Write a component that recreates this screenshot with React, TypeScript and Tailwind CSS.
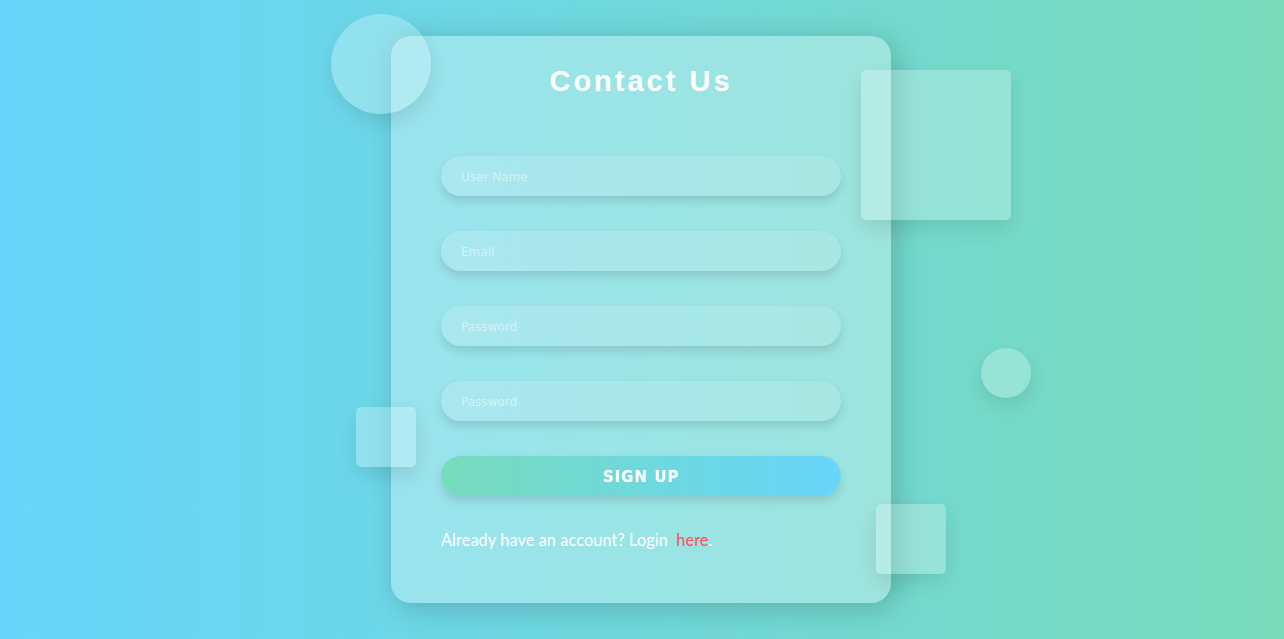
import React from "react";

const fields = ["User Name", "Email", "Password", "Password"];

function Shape({ className }: { className: string }) {
  return (
    <div
      className={`absolute bg-white/25 shadow-[0_8px_20px_rgba(0,0,0,0.1)] ${className}`}
    />
  );
}

export default function App() {
  return (
    <main className="flex h-screen w-full items-center justify-center bg-gradient-to-r from-[#68d5fb] to-[#79dbba]">
      <div className="relative mr-[2px]">
        <Shape className="left-[-60px] top-[-22px] z-10 h-[100px] w-[100px] rounded-full" />
        <Shape className="left-[470px] top-[34px] z-10 h-[150px] w-[150px] rounded-[5px]" />
        <Shape className="left-[-35px] top-[371px] z-10 h-[60px] w-[60px] rounded-[5px]" />
        <Shape className="left-[485px] top-[468px] z-10 h-[70px] w-[70px] rounded-[5px]" />
        <Shape className="left-[590px] top-[312px] h-[50px] w-[50px] rounded-full" />

        <div className="flex h-[567px] w-[500px] flex-col rounded-[20px] bg-white/30 px-[50px] shadow-[5px_5px_30px_rgba(0,0,0,0.2)]">
          <h2 className="mt-[24px] text-center font-['Liberation_Sans',Arial,sans-serif] text-[29px] font-bold tracking-[3px] text-white">
            Contact Us
          </h2>

          <form className="mt-[52px] flex flex-col gap-[35px]">
            {fields.map((f, i) => (
              <input
                key={i}
                type={f === "Password" ? "password" : "text"}
                placeholder={f}
                className="h-[40px] w-full rounded-full bg-gradient-to-r from-white/15 to-white/10 px-5 pt-[2px] font-['DejaVu_Sans',Tahoma,sans-serif] text-[12px] text-white shadow-[0_5px_10px_rgba(0,0,0,0.12)] outline-none placeholder:text-white/50"
              />
            ))}
            <button
              type="button"
              className="h-[40px] w-full rounded-full bg-gradient-to-r from-[#77dbbb] to-[#68d5fb] pt-[3px] font-['DejaVu_Sans',Tahoma,sans-serif] text-[15px] font-bold tracking-[1px] text-white shadow-[0_5px_10px_rgba(0,0,0,0.12)]"
            >
              SIGN UP
            </button>
          </form>

          <p className="mt-[32px] font-['Lato',sans-serif] text-[16.3px] tracking-[0.1px] text-white">
            Already have an account? Login{" "}
            <a href="#" className="ml-1 text-[#ff4f5a]">
              here
            </a>
            .
          </p>
        </div>
      </div>
    </main>
  );
}
